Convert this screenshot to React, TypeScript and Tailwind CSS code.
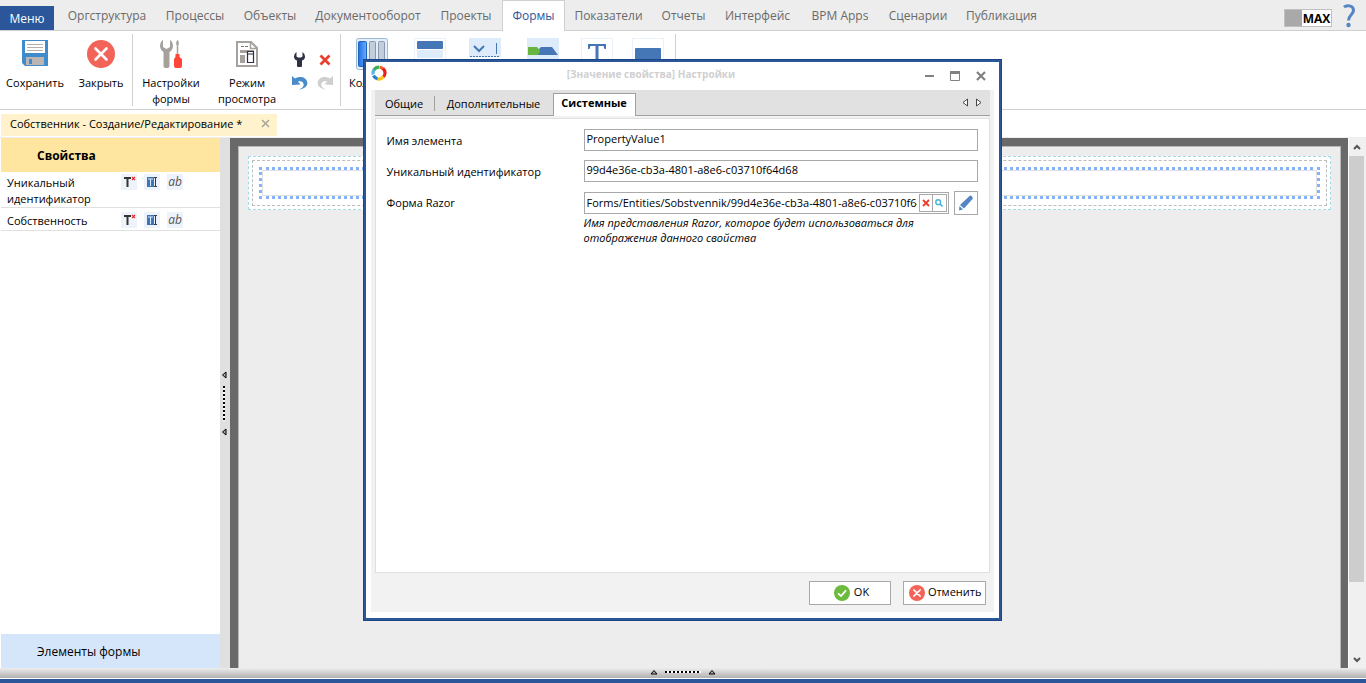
import React from 'react';

const tabs = [
  { label: 'Оргструктура', width: 'w-[98px]' },
  { label: 'Процессы', width: 'w-[78px]' },
  { label: 'Объекты', width: 'w-[72px]' },
  { label: 'Документооборот', width: 'w-[124px]' },
  { label: 'Проекты', width: 'w-[72px]' },
  { label: 'Формы', width: 'w-[63px]', active: true },
  { label: 'Показатели', width: 'w-[87px]' },
  { label: 'Отчеты', width: 'w-[63px]' },
  { label: 'Интерфейс', width: 'w-[85px]' },
  { label: 'BPM Apps', width: 'w-[80px]' },
  { label: 'Сценарии', width: 'w-[76px]' },
  { label: 'Публикация', width: 'w-[91px]' },
];

function CrossCircle({ className }: { className: string }) {
  return (
    <svg viewBox="0 0 28 28" className={className}>
      <circle cx="14" cy="14" r="14" fill="#f36458" />
      <path d="M8.500 8.500 19.500 19.500M19.500 8.500 8.500 19.500" stroke="#fff" strokeWidth="2.600" strokeLinecap="round" />
    </svg>
  );
}

function CheckCircle({ className }: { className: string }) {
  return (
    <svg viewBox="0 0 16 16" className={className}>
      <circle cx="8" cy="8" r="8" fill="#6cbb3c" />
      <path d="M4 8.400 7 11l5-5.600" stroke="#fff" strokeWidth="1.800" fill="none" />
    </svg>
  );
}

function SaveIcon() {
  return (
    <svg viewBox="0 0 26 26" className="h-[26px] w-[26px]">
      <path d="M0 0h26v26H3l-3-3z" fill="#3f8bcb" />
      <path d="M3 1h20v12H3z" fill="#fff" />
      <path d="M5 4.500h16M5 7.500h16M5 10.500h16" stroke="#b4b0ac" />
      <path d="M4 17h18v8H4z" fill="#b9b6b4" />
      <path d="M7 19h3v5H7z" fill="#3f8bcb" />
    </svg>
  );
}

function ToolsIcon() {
  return (
    <svg viewBox="0 0 22 28" className="h-7 w-[22px]">
      <path d="M3 0v7l3.500 2L10 7V0c2 1 3 3.500 3 6 0 2.500-1.500 5-3.500 6v14q0 2-3 2t-3-2V12C1.500 11 0 8.500 0 6c0-2.500 1-5 3-6z" fill="#a7a19d" />
      <path d="M17.500 0c1.500 1 1.500 3 1 5h-2c-.5-2-.5-4 1-5z" fill="#a7a19d" />
      <path d="M17.500 4v11" stroke="#a7a19d" strokeWidth="1.500" />
      <path d="M15.500 14h4v3l2.500 2v7q0 2-2 2h-4q-2 0-2-2v-7l1.500-2z" fill="#ff4638" />
    </svg>
  );
}

function PreviewIcon() {
  return (
    <svg viewBox="0 0 22 26" className="h-[26px] w-[22px]">
      <path d="M1 1h14l6 6v18H1z" fill="#fff" stroke="#a7a19d" strokeWidth="2" />
      <path d="M14.500 1v6.500H21" fill="none" stroke="#a7a19d" strokeWidth="1.500" />
      <path d="M5 5.500h3M9 5.500h3" stroke="#777" />
      <path d="M4 9h14v3H4zM4 14h5v8H4z" fill="#a7a19d" />
      <path d="M11.500 10.500h6v11h-6zM11.500 13h6" fill="#fff" stroke="#2c3146" strokeWidth="1.200" />
    </svg>
  );
}

function WrenchIcon() {
  return (
    <svg viewBox="0 0 11 15" className="h-[15px] w-[11px]">
      <path d="M2.500 0v4.500l1.500 1h3l1.500-1V0Q11 1.500 11 4.500 11 7.500 8 8.500V14q0 1-1 1H4q-1 0-1-1V8.500Q0 7.500 0 4.500 0 1.500 2.500 0z" fill="#2c3146" />
    </svg>
  );
}

function UndoIcon({ color, flip }: { color: string; flip?: boolean }) {
  return (
    <svg viewBox="0 0 16 15" className={flip ? 'h-[15px] w-4 -scale-x-100' : 'h-[15px] w-4'}>
      <path d="M0 1l3 2.500C8 .5 14.500 2 15.300 7.500 15.800 11.500 12 14 7 14.500 11 13 12.500 10.500 11.300 8.300 10.300 6.300 8 6 6 6.700L8.500 9.500 0 10z" fill={color} />
    </svg>
  );
}

function RedCross({ className }: { className: string }) {
  return (
    <svg viewBox="0 0 12 12" className={className}>
      <path d="M1.500 1.500 10.500 10.500M10.500 1.500 1.500 10.500" stroke="#e8402f" strokeWidth="2.800" />
    </svg>
  );
}

function RibbonButton({ label, width, children }: { label: string; width: string; children: React.ReactNode }) {
  return (
    <button type="button" className={`flex flex-col items-center pt-2 ${width}`}>
      <span className="flex h-9 items-start justify-center">{children}</span>
      <span className="text-[11px] leading-4">{label}</span>
    </button>
  );
}

function Separator() {
  return <div className="mt-[3px] h-[72px] w-px shrink-0 bg-[#d0d0d0]" />;
}

function ControlIcons() {
  return (
    <div className="flex items-start pt-[7px] pl-[3px]">
      <button type="button" className="w-8" aria-label="Колонки">
        <svg viewBox="0 0 32 32" className="h-8 w-8">
          <defs>
            <linearGradient id="column" x2="1">
              <stop offset="0" stopColor="#1f6fe0" />
              <stop offset="1" stopColor="#6aadff" />
            </linearGradient>
          </defs>
          <rect x=".5" y=".5" width="31" height="31" rx="2" fill="#e4eefa" stroke="#9bbad2" />
          <rect x="2.500" y="3.500" width="8" height="25" rx="1" fill="url(#column)" stroke="#1f62bf" />
          <rect x="13.500" y="3.500" width="6" height="25" rx="1" fill="#c3cedd" stroke="#8798af" />
          <rect x="22.500" y="3.500" width="6" height="25" rx="1" fill="#c3cedd" stroke="#8798af" />
        </svg>
      </button>
      <svg viewBox="0 0 32 32" className="ml-[26px] h-8 w-8">
        <rect x=".5" y=".5" width="31" height="31" fill="#fff" stroke="#eaf1fb" />
        <rect x="3" y="3" width="26" height="8" rx="1" fill="#4576b5" />
        <rect x="3" y="12" width="26" height="8" fill="#deebfb" />
      </svg>
      <svg viewBox="0 0 32 32" className="ml-[23px] h-8 w-8">
        <rect width="32" height="19" fill="#deebfb" />
        <path d="M5 8l5 5 5-5" fill="none" stroke="#4576b5" strokeWidth="2" />
        <path d="M27.500 5v11" stroke="#4576b5" />
        <path d="M1 18.500h30" stroke="#4576b5" strokeDasharray="2 1" />
      </svg>
      <svg viewBox="0 0 32 32" className="ml-[26px] h-8 w-8">
        <rect width="32" height="32" fill="#deebfb" />
        <path d="M1 9h9l7 8H1z" fill="#66b540" />
        <path d="M14 9h11l6 8H11l2-3-1-3z" fill="#4576b5" />
      </svg>
      <svg viewBox="0 0 32 32" className="ml-[22px] h-8 w-8">
        <rect x=".5" y=".5" width="31" height="31" fill="#fff" stroke="#eaf1fb" />
        <path d="M7 6h18v5h-1.500l-1-3H17.500V28h-3V8H9.500l-1 3H7z" fill="#4576b5" />
      </svg>
      <svg viewBox="0 0 32 32" className="ml-[19px] h-8 w-8">
        <rect x=".5" y=".5" width="31" height="31" fill="#fff" stroke="#eaf1fb" />
        <rect x="3" y="10" width="26" height="14" rx="1" fill="#4576b5" />
      </svg>
    </div>
  );
}

function Header() {
  return (
    <header className="flex h-[31px] shrink-0 items-stretch border-b border-[#d0d0d0] bg-[#ededed] text-[12px] text-[#6a6a6a]">
      <button type="button" className="mt-[6px] w-[54px] shrink-0 bg-[#2b579a] pt-px text-white">Меню</button>
      <nav className="ml-1 flex">
        {tabs.map((tab) => (
          <a
            key={tab.label}
            href="#"
            className={`flex shrink-0 items-center justify-center whitespace-nowrap ${tab.width} ${
              tab.active ? '-mb-px border border-b-0 border-[#d0d0d0] bg-white text-[#2b579a]' : 'pt-[2px]'
            }`}
          >
            {tab.label}
          </a>
        ))}
      </nav>
      <div className="ml-auto flex items-start">
        <button type="button" className="mt-[9px] flex h-[18px] w-12 border border-[#c0c0c0] bg-white">
          <span className="h-full w-[17px] bg-[#a9a9a9]" />
          <span className="flex-1 pt-px text-center text-[12px] leading-4 font-bold text-black">MAX</span>
        </button>
        <a href="#" aria-label="Справка" className="mr-[10px] ml-[11px]">
          <svg viewBox="0 0 13 24" className="mt-1 h-6 w-[13px]">
            <path d="M1 3.200C3.500 1 10.500.8 10.500 6.300c0 4.500-5 4.500-5 10.200" fill="none" stroke="#5585c5" strokeWidth="3" />
            <circle cx="5.500" cy="21" r="2.200" fill="#5585c5" />
          </svg>
        </a>
      </div>
    </header>
  );
}

function Ribbon() {
  return (
    <div className="flex h-[79px] shrink-0 border-b border-[#d0d0d0] bg-white">
      <RibbonButton label="Сохранить" width="w-[70px]">
        <span className="pt-px"><SaveIcon /></span>
      </RibbonButton>
      <RibbonButton label="Закрыть" width="w-[62px]">
        <span className="pt-px"><CrossCircle className="h-7 w-7" /></span>
      </RibbonButton>
      <Separator />
      <RibbonButton label="Настройки формы" width="w-[76px]">
        <span className="pt-px"><ToolsIcon /></span>
      </RibbonButton>
      <RibbonButton label="Режим просмотра" width="w-[76px]">
        <span className="pt-[2px]"><PreviewIcon /></span>
      </RibbonButton>
      <div className="grid h-[59px] w-[55px] grid-cols-2 content-end items-center justify-items-center gap-y-2 px-[2px]">
        <button type="button" aria-label="Параметры"><WrenchIcon /></button>
        <button type="button" aria-label="Удалить"><RedCross className="h-3 w-3" /></button>
        <button type="button" aria-label="Отменить действие"><UndoIcon color="#4a8ccb" /></button>
        <button type="button" aria-label="Повторить действие"><UndoIcon color="#cfcfcf" flip /></button>
      </div>
      <Separator />
      <div className="relative flex w-[334px]">
        <span className="absolute top-11 left-2 text-[11px] leading-4">Колонки</span>
        <div className="pl-3"><ControlIcons /></div>
      </div>
      <Separator />
    </div>
  );
}

function PropertyActions() {
  return (
    <div className="flex gap-[7px] pt-[2px]">
      <button type="button" className="h-4 w-4 bg-[#eef3fb]" aria-label="Подпись">
        <svg viewBox="0 0 16 16" className="h-4 w-4">
          <path d="M3 4h7M6.500 3v10" stroke="#333" strokeWidth="2" />
          <path d="M11 3l3 3M14 3l-3 3" stroke="#e03030" strokeWidth="1.200" />
        </svg>
      </button>
      <button type="button" className="h-4 w-4 bg-[#eef3fb]" aria-label="Поле">
        <svg viewBox="0 0 16 16" className="h-4 w-4">
          <rect x="3" y="3" width="7" height="10" fill="#3b76bb" />
          <path d="M4 5h5M6.500 5v7" stroke="#dce9f8" />
          <path d="M10 3.500h1.500v9H10M13 3.500h-1.500M13 12.500h-1.500" fill="none" stroke="#333" />
        </svg>
      </button>
      <button type="button" className="h-4 w-4 bg-[#eef3fb] text-[12px] leading-4 text-[#555] italic">ab</button>
    </div>
  );
}

function Sidebar() {
  return (
    <aside className="ml-px flex w-[219px] shrink-0 flex-col bg-white text-[11px] leading-4">
      <h2 className="flex h-[34px] items-center bg-[#ffe6a0] pt-[2px] pl-9 text-[12px] font-bold">Свойства</h2>
      <ul>
        <li className="flex border-b border-[#e0e0e0] pl-[6px]">
          <span className="w-[114px] pt-[3px]">Уникальный идентификатор</span>
          <PropertyActions />
        </li>
        <li className="flex border-b border-[#e0e0e0] pt-[2px] pb-px pl-[6px]">
          <span className="w-[114px] pt-[3px]">Собственность</span>
          <PropertyActions />
        </li>
      </ul>
      <button type="button" className="mt-auto h-[34px] bg-[#d5e6fb] pt-[2px] pl-9 text-left text-[12px]">Элементы формы</button>
    </aside>
  );
}

function SplitterHandle({ vertical }: { vertical?: boolean }) {
  const arrow = (
    <svg viewBox="0 0 8 6" className={vertical ? 'h-[6px] w-2 -rotate-90' : 'h-[6px] w-2'}>
      <path d="M1 5 4 1.500 7 5z" fill="#aaa" stroke="#000" />
    </svg>
  );
  return (
    <div className={vertical ? 'flex flex-col items-center gap-2' : 'flex items-center gap-[7px]'}>
      {arrow}
      <div
        className={
          vertical
            ? 'h-[35px] w-[2px] bg-[repeating-linear-gradient(180deg,#000_0_2px,#fff_2px_4px)]'
            : 'h-[2px] w-9 bg-[repeating-linear-gradient(90deg,#000_0_2px,#fff_2px_4px)]'
        }
      />
      {arrow}
    </div>
  );
}

function Canvas() {
  return (
    <main className="min-w-0 flex-1 border-t-8 border-r-7 border-l-8 border-[#696969]">
      <div className="h-full border border-b-0 border-[#b8b8b8] bg-[#ededed] p-[9px]">
        <div className="border border-dashed border-[#a5dbe8] bg-white p-[3px]">
          <div className="border border-dashed border-[#bdbdbd] p-[6px]">
            <div className="border-3 border-dotted border-[#86b3f8]">
              <div className="h-[26px] border border-[#e0e0e0] bg-white" />
            </div>
          </div>
        </div>
      </div>
    </main>
  );
}

function Scrollbar() {
  return (
    <div className="ml-px flex w-[17px] shrink-0 flex-col items-center bg-[#f0f0f0] pr-[2px]">
      <svg viewBox="0 0 8 6" className="my-[6px] h-[6px] w-2 shrink-0">
        <path d="M1 5 4 2 7 5" fill="none" stroke="#555" strokeWidth="2" />
      </svg>
      <div className="h-[426px] w-[15px] bg-[#cdcdcd]" />
      <svg viewBox="0 0 8 6" className="mt-auto mb-[5px] h-[6px] w-2 shrink-0">
        <path d="M1 1 4 4 7 1" fill="none" stroke="#555" strokeWidth="2" />
      </svg>
    </div>
  );
}

function SettingsDialog() {
  return (
    <div className="fixed inset-0 flex items-center justify-center pr-[2px] pb-[3px]">
      <section
        role="dialog"
        aria-labelledby="dialog-title"
        className="flex h-[562px] w-[639px] flex-col border-3 border-[#2b579a] bg-white px-[5px] pb-[6px] outline-1 -outline-offset-1 outline-[#1d4684]"
      >
        <header className="flex h-7 shrink-0 items-center">
          <svg viewBox="0 0 16 16" className="-mt-[6px] h-4 w-4">
            <g fill="none" strokeWidth="3.200">
              <path d="M8.500 2.200a6 6 0 0 1 4 2.300" stroke="#f0622a" />
              <path d="M12 3.500a6 6 0 0 1 .5 8.500" stroke="#e8201c" />
              <path d="M12.300 11.500A6 6 0 0 1 6 13.800" stroke="#f8c515" />
              <path d="M6.500 13.800a6 6 0 0 1-4-3.300" stroke="#2d7fd0" />
              <path d="M2.200 9.500a6 6 0 0 1 1-5" stroke="#56b4e6" />
              <path d="M3 4.800a6 6 0 0 1 5-2.700" stroke="#3fae55" />
            </g>
          </svg>
          <h1 id="dialog-title" className="flex-1 pr-2 pb-1 text-center text-[10px] font-bold text-[#d0d0d0]">
            [Значение свойства] Настройки
          </h1>
          <div className="flex gap-4 pr-2">
            <button type="button" aria-label="Свернуть">
              <svg viewBox="0 0 10 10" className="h-[10px] w-[10px]"><path d="M1 5h9" stroke="#808080" strokeWidth="2" /></svg>
            </button>
            <button type="button" aria-label="Развернуть">
              <svg viewBox="0 0 10 10" className="h-[10px] w-[10px]">
                <path d="M.5.5h9v9h-9z" fill="none" stroke="#808080" />
                <path d="M0 0h10v3H0z" fill="#808080" />
              </svg>
            </button>
            <button type="button" aria-label="Закрыть">
              <svg viewBox="0 0 10 10" className="h-[10px] w-[10px]"><path d="M1 1l8 8M9 1 1 9" stroke="#808080" strokeWidth="2.200" /></svg>
            </button>
          </div>
        </header>

        <div className="flex min-h-0 flex-1 flex-col bg-[#f2f2f2] px-1">
          <div role="tablist" className="flex h-[26px] shrink-0 border-b border-[#a0a0a0] bg-[#e1e1e1] text-[11px]">
            <button type="button" role="tab" className="mt-[6px] mb-1 w-[60px] border-r border-[#a0a0a0]">Общие</button>
            <button type="button" role="tab" className="w-[118px] pt-[3px]">Дополнительные</button>
            <button type="button" role="tab" aria-selected="true" className="mt-[3px] -mb-px w-[83px] border border-b-0 border-[#a0a0a0] bg-white pb-[3px] font-bold">
              Системные
            </button>
            <div className="ml-auto flex items-center gap-2 pr-2">
              <button type="button" aria-label="Назад">
                <svg viewBox="0 0 6 9" className="h-[9px] w-[6px]"><path d="M5.500 1v7L1 4.500z" fill="#fff" stroke="#444" /></svg>
              </button>
              <button type="button" aria-label="Вперед">
                <svg viewBox="0 0 6 9" className="h-[9px] w-[6px]"><path d="M.5 1v7L5 4.500z" fill="#fff" stroke="#444" /></svg>
              </button>
            </div>
          </div>

          <form className="mt-[2px] flex-1 border border-[#e0e0e0] bg-white pt-[10px] pr-[11px] pl-[11px] text-[11px]">
            <div className="flex items-center">
              <label htmlFor="name" className="w-[197px] pt-[2px]">Имя элемента</label>
              <input id="name" defaultValue="PropertyValue1" className="h-[22px] min-w-0 flex-1 border border-[#a9a9a9] px-[2px] pb-[3px]" />
            </div>
            <div className="mt-[9px] flex items-center">
              <label htmlFor="uid" className="w-[197px] pt-[2px]">Уникальный идентификатор</label>
              <input id="uid" defaultValue="99d4e36e-cb3a-4801-a8e6-c03710f64d68" className="h-[22px] min-w-0 flex-1 border border-[#a9a9a9] px-[2px] pb-[3px]" />
            </div>
            <div className="mt-[9px] flex items-center">
              <label htmlFor="razor" className="w-[197px]">Форма Razor</label>
              <div className="flex h-[22px] min-w-0 flex-1 items-center border border-[#a9a9a9] pr-px">
                <input
                  id="razor"
                  defaultValue="Forms/Entities/Sobstvennik/99d4e36e-cb3a-4801-a8e6-c03710f64d68"
                  className="min-w-0 flex-1 pl-[2px]"
                />
                <button type="button" aria-label="Очистить" className="ml-[2px] flex h-[18px] w-[14px] items-center justify-center border border-[#a9a9a9]">
                  <RedCross className="h-2 w-2" />
                </button>
                <button type="button" aria-label="Найти" className="flex h-[18px] w-[14px] items-center justify-center border border-l-0 border-[#a9a9a9]">
                  <svg viewBox="0 0 8 8" className="h-2 w-2">
                    <circle cx="3.200" cy="3.200" r="2.400" fill="none" stroke="#45b5d8" strokeWidth="1.400" />
                    <path d="M5 5l2.500 2.500" stroke="#45b5d8" strokeWidth="1.600" />
                  </svg>
                </button>
              </div>
              <button type="button" aria-label="Редактировать" className="ml-[5px] flex h-6 w-6 items-center justify-center border border-[#a9a9a9]">
                <svg viewBox="0 0 16 16" className="h-4 w-4">
                  <path d="M11.500 1q1-1 2.500.5t.5 2.500L6 13.500 2 10z" fill="#5585c5" />
                  <path d="M1.500 11 5 14.500 1 15.500z" fill="#5585c5" />
                </svg>
              </button>
            </div>
            <p className="ml-[197px] w-[350px] leading-[15px] italic">
              Имя представления Razor, которое будет использоваться для отображения данного свойства
            </p>
          </form>

          <footer className="flex h-[39px] shrink-0 items-center justify-end gap-3 text-[11px]">
            <button type="button" className="flex h-6 w-[82px] items-center justify-center gap-1 border border-[#a9a9a9] bg-white pl-1">
              <CheckCircle className="h-4 w-4" />
              OK
            </button>
            <button type="button" className="mr-1 flex h-6 w-[83px] items-center justify-end gap-[3px] border border-[#a9a9a9] bg-white pr-[3px]">
              <CrossCircle className="h-4 w-4 shrink-0" />
              Отменить
            </button>
          </footer>
        </div>
      </section>
    </div>
  );
}

export default function App() {
  return (
    <div className="flex h-screen flex-col overflow-hidden bg-white font-['Open_Sans','Noto_Sans',sans-serif] text-black">
      <Header />
      <Ribbon />
      <div className="flex h-7 shrink-0 items-start border-b border-[#ededed] pt-1 pl-px">
        <div className="flex h-[22px] w-[276px] items-center bg-[#fff2cc] pr-[7px] pb-[2px] pl-[9px] text-[11px]">
          <span className="flex-1 whitespace-nowrap">Собственник - Создание/Редактирование *</span>
          <button type="button" aria-label="Закрыть вкладку" className="mb-[2px]">
            <svg viewBox="0 0 9 9" className="h-[9px] w-[9px]"><path d="M1 1l7 7M8 1 1 8" stroke="#aaa69c" strokeWidth="1.600" /></svg>
          </button>
        </div>
      </div>
      <div className="flex min-h-0 flex-1">
        <Sidebar />
        <div className="flex w-[10px] shrink-0 flex-col items-center justify-center bg-[#e0e0e0] pr-[2px]">
          <SplitterHandle vertical />
        </div>
        <Canvas />
        <Scrollbar />
      </div>
      <div className="flex h-[11px] shrink-0 items-center justify-center border-b border-white bg-linear-to-b from-[#ededed] to-[#b0b0b0] pb-[2px]">
        <SplitterHandle />
      </div>
      <div className="h-1 shrink-0 bg-[#2b579a]" />
      <SettingsDialog />
    </div>
  );
}
